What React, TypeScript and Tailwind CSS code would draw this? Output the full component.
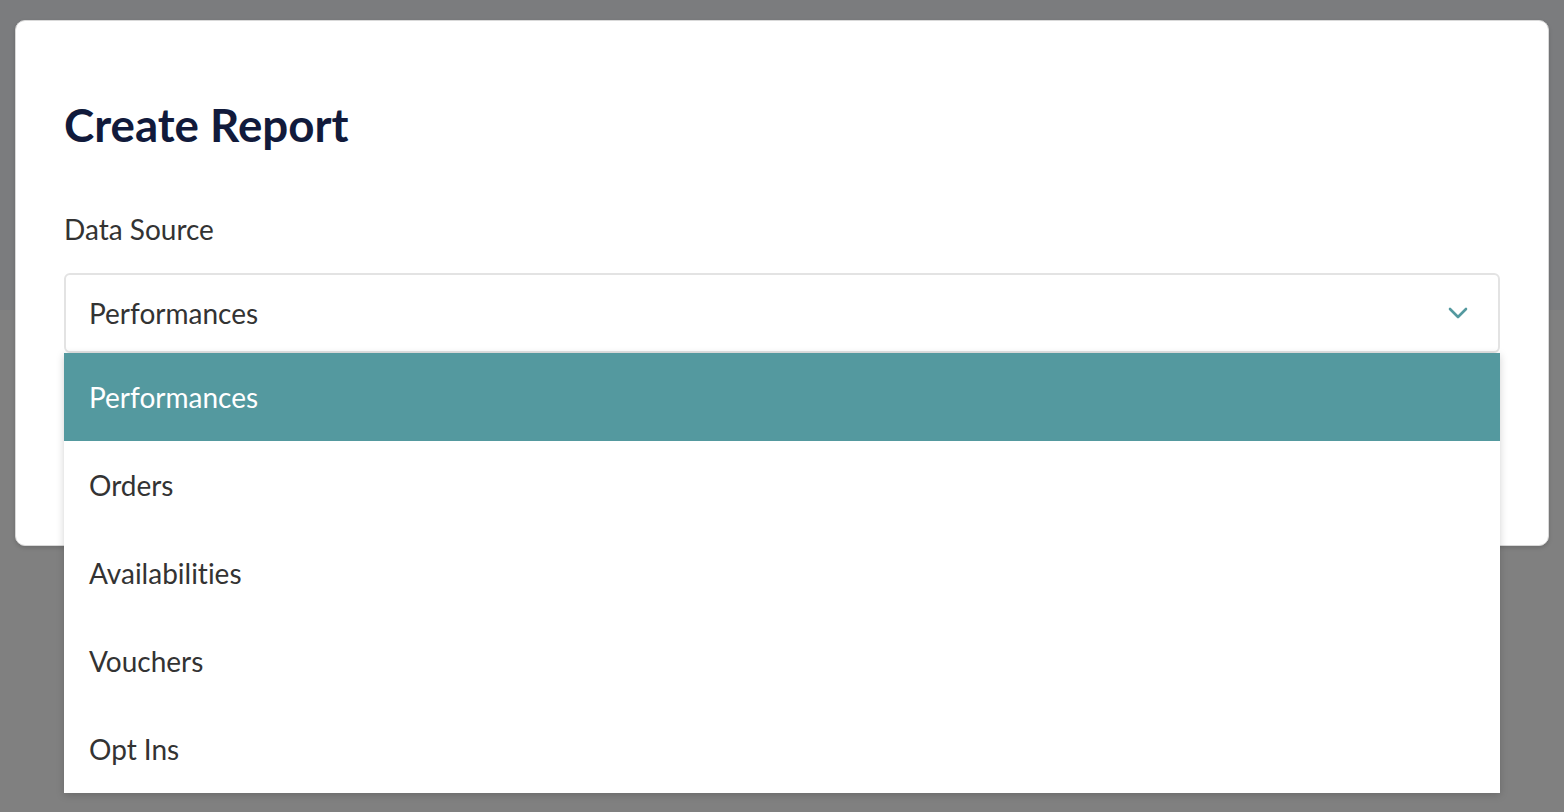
import React, { useState } from 'react';

const options = ['Performances', 'Orders', 'Availabilities', 'Vouchers', 'Opt Ins'];

const ChevronDown = () => (
  <svg width="20" height="12" viewBox="0 0 20 12" fill="none">
    <path d="M2 2l8 8 8-8" stroke="#54999f" strokeWidth="2.6" strokeLinecap="round" strokeLinejoin="round" />
  </svg>
);

const App = () => {
  const [selected, setSelected] = useState('Performances');

  return (
    <div
      className="min-h-[812px] w-full bg-[linear-gradient(to_bottom,#7b7c7e_310px,#808080_310px)] pt-5 px-[15px] [font-variant-ligatures:none]"
      style={{ fontFamily: 'Lato, "Open Sans", sans-serif' }}
    >
      <div className="relative rounded-[10px] border border-[#d9d9d9] bg-white px-12 pt-[76px] pb-[48px] shadow-[0_2px_4px_rgba(0,0,0,0.15)]">
        <h1 className="text-[45.7px] leading-[56px] font-bold text-[#111a3b]">Create Report</h1>

        <label className="mt-[59px] block text-[28px] leading-[34px] text-[#333]">Data Source</label>

        {/* Select */}
        <div className="relative mt-[27px]">
          <button className="flex h-[80px] w-full items-center justify-between rounded-[6px] border-2 border-[#e3e3e3] bg-white pl-[23px] pr-[30px] text-left">
            <span className="text-[28px] text-[#333]">{selected}</span>
            <ChevronDown />
          </button>

          {/* Menu */}
          <ul className="absolute left-0 right-0 top-[80px] z-10 bg-white shadow-[0_2px_8px_rgba(0,0,0,0.18)]">
            {options.map((opt) => (
              <li
                key={opt}
                onClick={() => setSelected(opt)}
                className={
                  opt === selected
                    ? 'flex h-[88px] items-center bg-[#54999f] px-[25px] text-[28px] text-white'
                    : 'flex h-[88px] items-center px-[25px] text-[28px] text-[#333]'
                }
              >
                {opt}
              </li>
            ))}
          </ul>
        </div>
        <div className="h-[144px]" />
      </div>
    </div>
  );
};

export default App;
